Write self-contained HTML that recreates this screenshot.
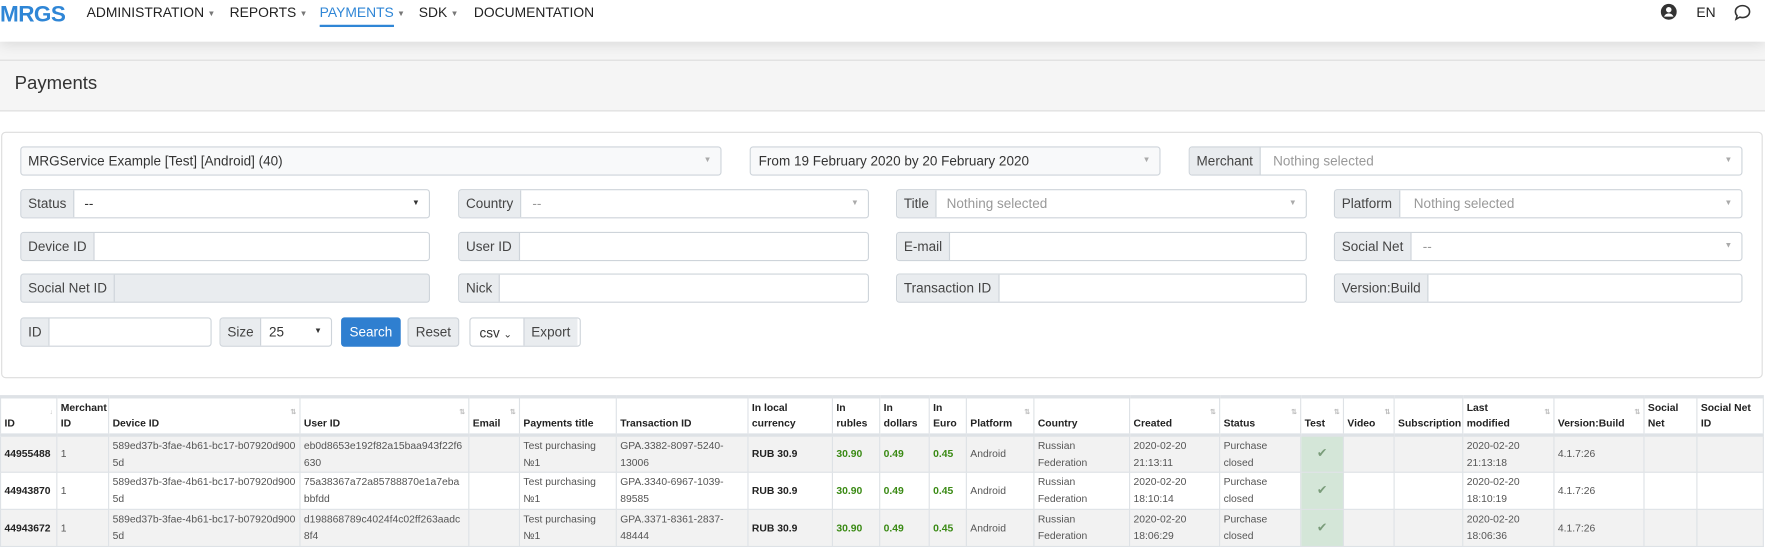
<!DOCTYPE html>
<html><head><meta charset="utf-8">
<style>
html,body{margin:0;padding:0;background:#fff;overflow:hidden;width:1765px;height:534px}
#w{position:absolute;left:0;top:0;width:1568px;height:474px;transform:scale(1.12564);transform-origin:0 0;font-family:"Liberation Sans",sans-serif;color:#333}
.a{position:absolute}
.nav{left:0;top:0;width:1568px;height:37px;background:#fff;z-index:2;box-shadow:0 2px 12px rgba(0,0,0,.12)}
.ni{position:absolute;top:4px;font-size:12.3px;color:#222}
.car{font-size:7px;color:#777;margin-left:3px;vertical-align:1px}
.grp{position:absolute;height:26px;border:1px solid #ced4da;border-radius:3px;background:#fff;box-sizing:border-box;font-size:12px;overflow:hidden}
.lab{position:absolute;left:0;top:0;bottom:0;background:#e9ecef;border-right:1px solid #ced4da;padding:0 6px;line-height:24px;color:#444}
.val{position:absolute;top:0;line-height:24px;color:#999}
.dd{position:absolute;right:8px;top:0;line-height:24px;font-size:7px;color:#aaa}
table{border-collapse:collapse;font-size:9.2px;table-layout:fixed}
th{text-align:left;vertical-align:bottom;font-weight:bold;padding:1px 3px 2px;border:1px solid #dee2e6;border-bottom:3px solid #dee2e6;border-top:3px solid #dee2e6;line-height:14px;color:#222;position:relative;box-sizing:border-box}
td{padding:0 3px;border:1px solid #dee2e6;line-height:15px;vertical-align:middle;color:#555;word-break:break-all}
tr.r{height:33px}
tr.g td{background:#f2f2f2}
td.b{font-weight:bold;color:#222;word-break:normal}
td.gr{font-weight:bold;color:#3a8a14}
td.w{word-break:normal}
td.t{background:#d4e6d8!important;text-align:center;color:#7a9c7a;font-size:11px}
th i{position:absolute;right:3px;top:6px;font-size:6px;color:#bbb;font-style:normal}
</style></head><body><div id="w">
<div class="a nav">
 <div class="a" style="left:0;top:2px;font-size:20px;font-weight:bold;color:#2f86d6;letter-spacing:-.5px">MRGS</div>
 <div class="ni" style="left:77px">ADMINISTRATION<span class="car">▼</span></div>
 <div class="ni" style="left:204px">REPORTS<span class="car">▼</span></div>
 <div class="ni" style="left:284px;color:#2f86d6">PAYMENTS<span class="car">▼</span></div>
 <div class="a" style="left:284px;top:22px;width:66px;height:2px;background:#2f86d6"></div>
 <div class="ni" style="left:372px">SDK<span class="car">▼</span></div>
 <div class="ni" style="left:421px">DOCUMENTATION</div>
 <svg class="a" style="left:1475px;top:3px" width="15" height="15" viewBox="0 0 16 16"><circle cx="8" cy="8" r="7.5" fill="#333"/><circle cx="8" cy="6" r="2.6" fill="#fff"/><path d="M3.5 12.5c1-2 2.5-3 4.5-3s3.5 1 4.5 3" fill="#fff"/></svg>
 <div class="ni" style="left:1507px">EN</div>
 <svg class="a" style="left:1540px;top:3px" width="16" height="16" viewBox="0 0 16 16"><path d="M8 2c3.6 0 6.3 2.3 6.3 5.3S11.6 12.6 8 12.6c-.8 0-1.6-.1-2.3-.4L2.3 14l.9-3C2.3 10 1.7 8.7 1.7 7.3 1.7 4.3 4.4 2 8 2z" fill="none" stroke="#333" stroke-width="1.4"/></svg>
</div>
<div class="a" style="left:0;top:37px;width:1568px;height:61px;background:#f5f5f5;border-bottom:1px solid #ddd"></div>
<div class="a" style="left:0;top:53px;width:1568px;height:1px;background:#ddd"></div>
<div class="a" style="left:13px;top:65px;font-size:16.5px;color:#333">Payments</div>

<div class="a" style="left:1px;top:117px;width:1563px;height:217px;border:1px solid #ddd;border-radius:4px;background:#fff"></div>

<div class="grp" style="left:18px;top:130px;width:623px;background:#f8f9fa"><div class="val" style="left:6px;color:#333">MRGService Example [Test] [Android] (40)</div><div class="dd">▼</div></div>
<div class="grp" style="left:666px;top:130px;width:365px;background:#f8f9fa"><div class="val" style="left:7px;color:#333">From 19 February 2020 by 20 February 2020</div><div class="dd">▼</div></div>
<div class="grp" style="left:1056px;top:130px;width:492px"><div class="lab">Merchant</div><div class="val" style="left:74px">Nothing selected</div><div class="dd">▼</div></div>

<div class="grp" style="left:18px;top:168px;width:364px"><div class="lab">Status</div><div class="val" style="left:56px;color:#333">--</div><div class="dd" style="color:#333">▼</div></div>
<div class="grp" style="left:407px;top:168px;width:365px"><div class="lab">Country</div><div class="val" style="left:65px">--</div><div class="dd">▼</div></div>
<div class="grp" style="left:796px;top:168px;width:365px"><div class="lab">Title</div><div class="val" style="left:44px">Nothing selected</div><div class="dd">▼</div></div>
<div class="grp" style="left:1185px;top:168px;width:363px"><div class="lab">Platform</div><div class="val" style="left:70px">Nothing selected</div><div class="dd">▼</div></div>

<div class="grp" style="left:18px;top:206px;width:364px"><div class="lab">Device ID</div></div>
<div class="grp" style="left:407px;top:206px;width:365px"><div class="lab">User ID</div></div>
<div class="grp" style="left:796px;top:206px;width:365px"><div class="lab">E-mail</div></div>
<div class="grp" style="left:1185px;top:206px;width:363px"><div class="lab">Social Net</div><div class="val" style="left:78px">--</div><div class="dd">▼</div></div>

<div class="grp" style="left:18px;top:243px;width:364px;background:#e9ecef"><div class="lab">Social Net ID</div></div>
<div class="grp" style="left:407px;top:243px;width:365px"><div class="lab">Nick</div></div>
<div class="grp" style="left:796px;top:243px;width:365px"><div class="lab">Transaction ID</div></div>
<div class="grp" style="left:1185px;top:243px;width:363px"><div class="lab">Version:Build</div></div>

<div class="grp" style="left:18px;top:282px;width:170px"><div class="lab">ID</div></div>
<div class="grp" style="left:195px;top:282px;width:100px"><div class="lab">Size</div><div class="val" style="left:43px;color:#333">25</div><div class="dd" style="color:#333">▼</div></div>
<div class="a" style="left:303px;top:282px;width:53px;height:26px;background:#2f7fd0;border-radius:3px;color:#fff;font-size:12px;line-height:26px;text-align:center">Search</div>
<div class="a" style="left:362px;top:282px;width:46px;height:26px;background:#e9ecef;border:1px solid #ced4da;box-sizing:border-box;border-radius:3px;color:#444;font-size:12px;line-height:24px;text-align:center">Reset</div>
<div class="grp" style="left:417px;top:282px;width:99px"><div class="val" style="left:8px;color:#333;top:1px">csv <span style="font-size:9px">⌄</span></div><div class="lab" style="left:47px;right:auto;border-left:1px solid #ced4da;border-right:0">Export</div></div>

<table class="a" style="left:0;top:351px;width:1566px">
<colgroup><col style="width:50px"><col style="width:46px"><col style="width:170px"><col style="width:150px"><col style="width:45px"><col style="width:86px"><col style="width:117px"><col style="width:75px"><col style="width:42px"><col style="width:44px"><col style="width:33px"><col style="width:60px"><col style="width:85px"><col style="width:80px"><col style="width:72px"><col style="width:38px"><col style="width:45px"><col style="width:61px"><col style="width:81px"><col style="width:80px"><col style="width:47px"><col style="width:59px"></colgroup>
<tr style="height:33px"><th>ID<i>↓</i></th><th>Merchant ID</th><th>Device ID<i>⇅</i></th><th>User ID<i>⇅</i></th><th>Email<i>⇅</i></th><th>Payments title</th><th>Transaction ID</th><th>In local currency</th><th>In rubles</th><th>In dollars</th><th>In Euro</th><th>Platform<i>⇅</i></th><th>Country</th><th>Created<i>⇅</i></th><th>Status<i>⇅</i></th><th>Test<i>⇅</i></th><th>Video<i>⇅</i></th><th>Subscription</th><th>Last<br>modified<i>⇅</i></th><th>Version:Build<i>⇅</i></th><th>Social Net</th><th>Social Net ID</th></tr>
<tr class="g r"><td class="b">44955488</td><td>1</td><td>589ed37b-3fae-4b61-bc17-b07920d9005d</td><td>eb0d8653e192f82a15baa943f22f6630</td><td></td><td class="w">Test purchasing №1</td><td class="w">GPA.3382-8097-5240-13006</td><td class="b">RUB 30.9</td><td class="gr">30.90</td><td class="gr">0.49</td><td class="gr">0.45</td><td>Android</td><td class="w">Russian Federation</td><td class="w">2020-02-20 21:13:11</td><td class="w">Purchase closed</td><td class="t">✔</td><td></td><td></td><td class="w">2020-02-20 21:13:18</td><td>4.1.7:26</td><td></td><td></td></tr>
<tr class="r"><td class="b">44943870</td><td>1</td><td>589ed37b-3fae-4b61-bc17-b07920d9005d</td><td>75a38367a72a85788870e1a7ebabbfdd</td><td></td><td class="w">Test purchasing №1</td><td class="w">GPA.3340-6967-1039-89585</td><td class="b">RUB 30.9</td><td class="gr">30.90</td><td class="gr">0.49</td><td class="gr">0.45</td><td>Android</td><td class="w">Russian Federation</td><td class="w">2020-02-20 18:10:14</td><td class="w">Purchase closed</td><td class="t">✔</td><td></td><td></td><td class="w">2020-02-20 18:10:19</td><td>4.1.7:26</td><td></td><td></td></tr>
<tr class="g r"><td class="b">44943672</td><td>1</td><td>589ed37b-3fae-4b61-bc17-b07920d9005d</td><td>d198868789c4024f4c02ff263aadc8f4</td><td></td><td class="w">Test purchasing №1</td><td class="w">GPA.3371-8361-2837-48444</td><td class="b">RUB 30.9</td><td class="gr">30.90</td><td class="gr">0.49</td><td class="gr">0.45</td><td>Android</td><td class="w">Russian Federation</td><td class="w">2020-02-20 18:06:29</td><td class="w">Purchase closed</td><td class="t">✔</td><td></td><td></td><td class="w">2020-02-20 18:06:36</td><td>4.1.7:26</td><td></td><td></td></tr>
</table>
</div></body></html>
